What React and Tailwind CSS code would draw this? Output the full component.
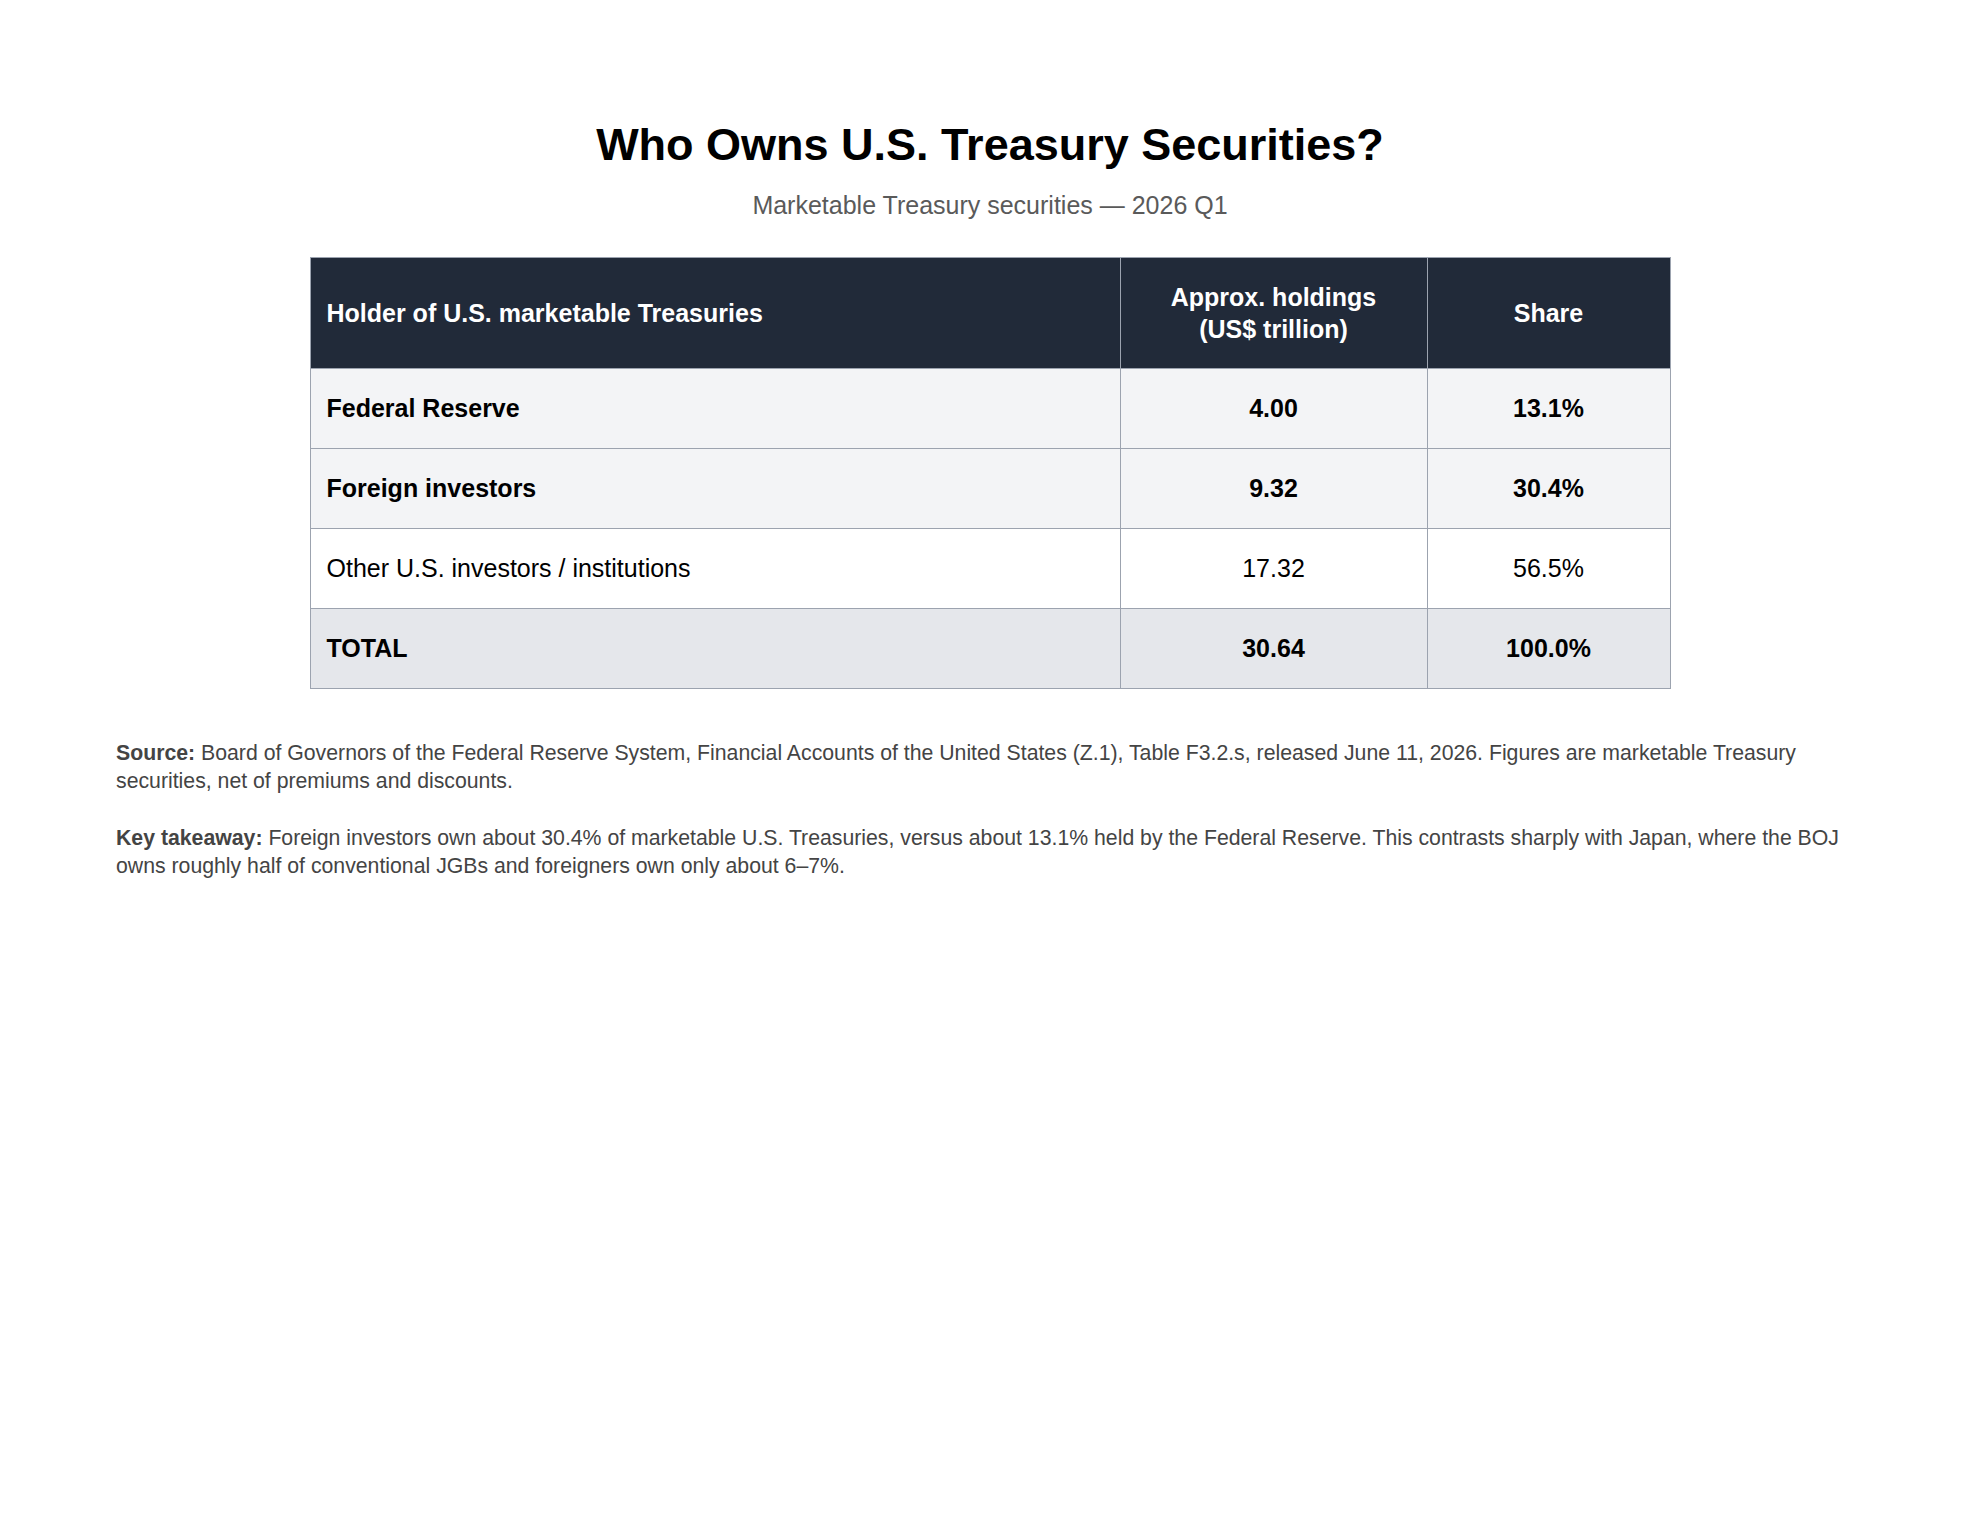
import React from "react";

const rows = [
  { name: "Federal Reserve", amt: "4.00", share: "13.1%", bold: true, bg: "bg-[#f3f4f6]" },
  { name: "Foreign investors", amt: "9.32", share: "30.4%", bold: true, bg: "bg-[#f3f4f6]" },
  { name: "Other U.S. investors / institutions", amt: "17.32", share: "56.5%", bold: false, bg: "bg-white" },
  { name: "TOTAL", amt: "30.64", share: "100.0%", bold: true, bg: "bg-[#e5e7eb]" },
];

export default function App() {
  return (
    <div className="min-h-[1530px] w-full bg-white font-['Liberation_Sans',Arial,sans-serif] text-black">
      <div className="px-[116px] pt-[118px]">
        <h1 className="text-center text-[45px] font-bold leading-[54px] text-black">
          Who Owns U.S. Treasury Securities?
        </h1>
        <p className="mt-[18px] text-center text-[25px] leading-[30px] text-[#5a5a5a]">
          Marketable Treasury securities — 2026 Q1
        </p>

        <div className="mt-[37px] flex justify-center">
          <table className="w-[1360px] table-fixed border-collapse text-[25px] leading-[31px]">
            <colgroup>
              <col className="w-[810px]" />
              <col className="w-[307px]" />
              <col className="w-[243px]" />
            </colgroup>
            <thead>
              <tr className="bg-[#212a39] text-white leading-[32px]">
                <th className="border border-[#9ca3af] px-4 py-[23px] text-left font-bold">
                  Holder of U.S. marketable Treasuries
                </th>
                <th className="border border-[#9ca3af] px-4 py-[23px] text-center font-bold">
                  Approx. holdings
                  <br />
                  (US$ trillion)
                </th>
                <th className="border border-[#9ca3af] px-4 py-[23px] text-center font-bold">Share</th>
              </tr>
            </thead>
            <tbody>
              {rows.map((r) => (
                <tr key={r.name} className={r.bg}>
                  <td className={`border border-[#9ca3af] px-4 py-6 text-left ${r.bold ? "font-bold" : "font-normal"}`}>
                    {r.name}
                  </td>
                  <td className={`border border-[#9ca3af] px-4 py-6 text-center ${r.bold ? "font-bold" : "font-normal"}`}>
                    {r.amt}
                  </td>
                  <td className={`border border-[#9ca3af] px-4 py-6 text-center ${r.bold ? "font-bold" : "font-normal"}`}>
                    {r.share}
                  </td>
                </tr>
              ))}
            </tbody>
          </table>
        </div>

        <div className="mt-[50px] text-[21.25px] leading-[28px] text-[#444444]">
          <p>
            <b className="font-bold">Source:</b> Board of Governors of the Federal Reserve System, Financial
            Accounts of the United States (Z.1), Table F3.2.s, released June 11, 2026. Figures are marketable Treasury
            securities, net of premiums and discounts.
          </p>
          <p className="mt-[29px]">
            <b className="font-bold">Key takeaway:</b> Foreign investors own about 30.4% of marketable U.S.
            Treasuries, versus about 13.1% held by the Federal Reserve. This contrasts sharply with Japan, where the BOJ
            owns roughly half of conventional JGBs and foreigners own only about 6–7%.
          </p>
        </div>
      </div>
    </div>
  );
}
